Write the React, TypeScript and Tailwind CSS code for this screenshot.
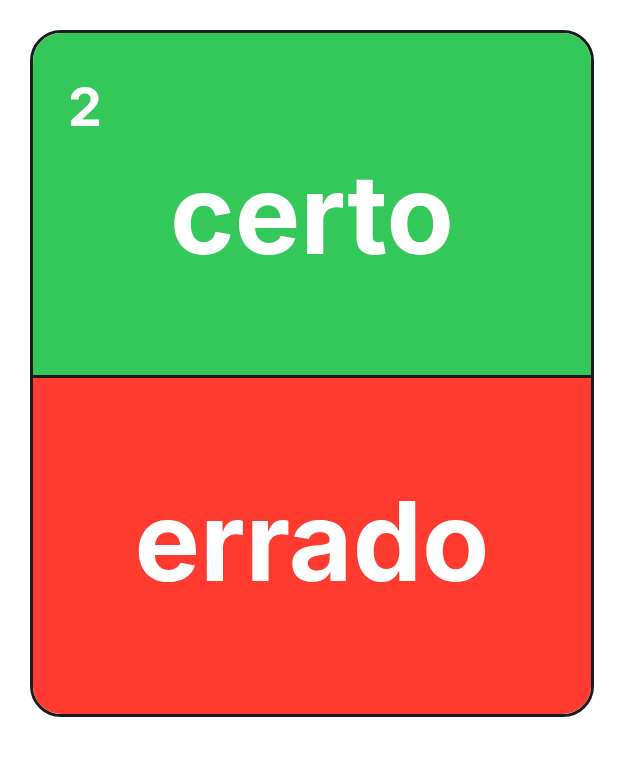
export default function App() {
  return (
    <div className="w-[636px] h-[759px] bg-white pt-[30px] pl-[30px]" style={{ fontFamily: 'Inter, "Noto Sans", sans-serif' }}>
      <div className="w-[564px] h-[687px] flex flex-col rounded-[31px] border-[3px] border-[#1c1c1e] overflow-hidden">
        {/* top: correct */}
        <div className="relative h-[345px] flex justify-center pt-[126px] bg-[#34c759] border-b-[3px] border-[#1c1c1e]">
          <span className="absolute left-[35px] top-[47px] text-[54px] leading-none font-bold text-white">2</span>
          <span className="text-[110px] leading-none font-bold text-white">certo</span>
        </div>
        {/* bottom: wrong */}
        <div className="flex-1 flex justify-center pt-[108px] bg-[#ff3b30]">
          <span className="text-[110px] leading-none font-bold text-white">errado</span>
        </div>
      </div>
    </div>
  )
}
